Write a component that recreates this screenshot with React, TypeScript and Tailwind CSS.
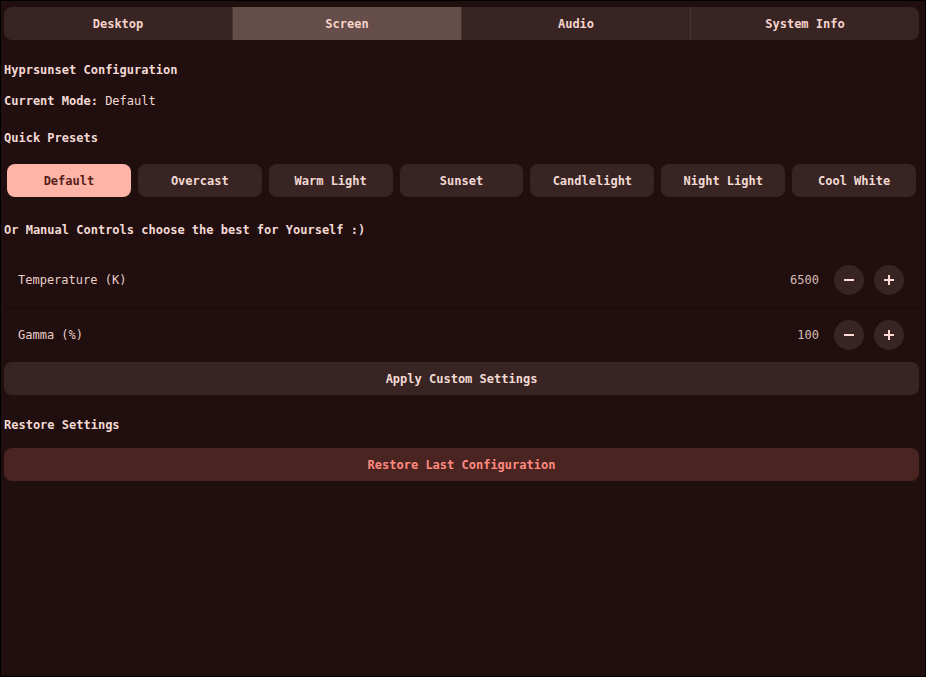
import { useState } from "react"

const tabs = ["Desktop", "Screen", "Audio", "System Info"]
const presets = ["Default", "Overcast", "Warm Light", "Sunset", "Candlelight", "Night Light", "Cool White"]

function RoundBtn({ plus }: { plus?: boolean }) {
  return (
    <button className="w-[30px] h-[30px] rounded-full bg-[#382523] flex items-center justify-center">
      <svg width="12" height="12" viewBox="0 0 12 12">
        <line x1="1" y1="6" x2="11" y2="6" stroke="#ffdad4" strokeWidth="2" />
        {plus && <line x1="6" y1="1" x2="6" y2="11" stroke="#ffdad4" strokeWidth="2" />}
      </svg>
    </button>
  )
}

function ControlRow({ label, value, h }: { label: string; value: number; h: string }) {
  return (
    <div className={h + " flex items-center pl-[14px] pr-[15px]"}>
      <span className="flex-1 text-[#ebcdc8]">{label}</span>
      <span className="text-[#d9bcb7] mr-[15px]">{value}</span>
      <div className="flex gap-[10px]">
        <RoundBtn />
        <RoundBtn plus />
      </div>
    </div>
  )
}

export default function App() {
  const [tab, setTab] = useState("Screen")
  const [preset, setPreset] = useState("Default")

  return (
    <div
      className="w-[926px] h-[677px] border border-black bg-[#200f0e] pl-[3px] pr-[6px] pt-[6px] text-[12px] leading-[16px] text-[#f3d9d4] overflow-hidden"
      style={{ fontFamily: '"DejaVu Sans Mono", "Liberation Mono", monospace' }}
    >
      {/* Tabs */}
      <div className="flex h-[33px] rounded-[8px] bg-[#382523] overflow-hidden">
        {tabs.map((t, i) => (
          <button
            key={t}
            onClick={() => setTab(t)}
            className={
              "flex-1 font-bold text-[#f7d3cc] " +
              (i > 0 ? "border-l border-[#4a3532] " : "") +
              (tab === t ? "bg-[#654d49]" : "")
            }
          >
            {t}
          </button>
        ))}
      </div>

      <div className="mt-[22px] font-bold">Hyprsunset Configuration</div>
      <div className="mt-[15px]">
        <span className="font-bold">Current Mode:</span> Default
      </div>
      <div className="mt-[21px] font-bold">Quick Presets</div>

      {/* Presets */}
      <div className="mt-[18px] flex gap-[7px] px-[3px]">
        {presets.map((p) => (
          <button
            key={p}
            onClick={() => setPreset(p)}
            className={
              "flex-1 h-[33px] rounded-[8px] font-bold " +
              (preset === p ? "bg-[#ffb4a8] text-[#561e18]" : "bg-[#382523] text-[#f3d9d4]")
            }
          >
            {p}
          </button>
        ))}
      </div>

      <div className="mt-[25px] font-bold">Or Manual Controls choose the best for Yourself :)</div>

      <div className="mt-[14px]">
        <ControlRow label="Temperature (K)" value={6500} h="h-[55px]" />
        <div className="h-px bg-[#160a09]" />
        <ControlRow label="Gamma (%)" value={100} h="h-[54px]" />
      </div>

      <button className="w-full h-[33px] rounded-[8px] bg-[#382523] font-bold text-[#f3d9d4]">
        Apply Custom Settings
      </button>

      <div className="mt-[22px] font-bold">Restore Settings</div>

      <button className="mt-[15px] w-full h-[33px] rounded-[8px] bg-[#4a2421] font-bold text-[#ff8a80]">
        Restore Last Configuration
      </button>
    </div>
  )
}
